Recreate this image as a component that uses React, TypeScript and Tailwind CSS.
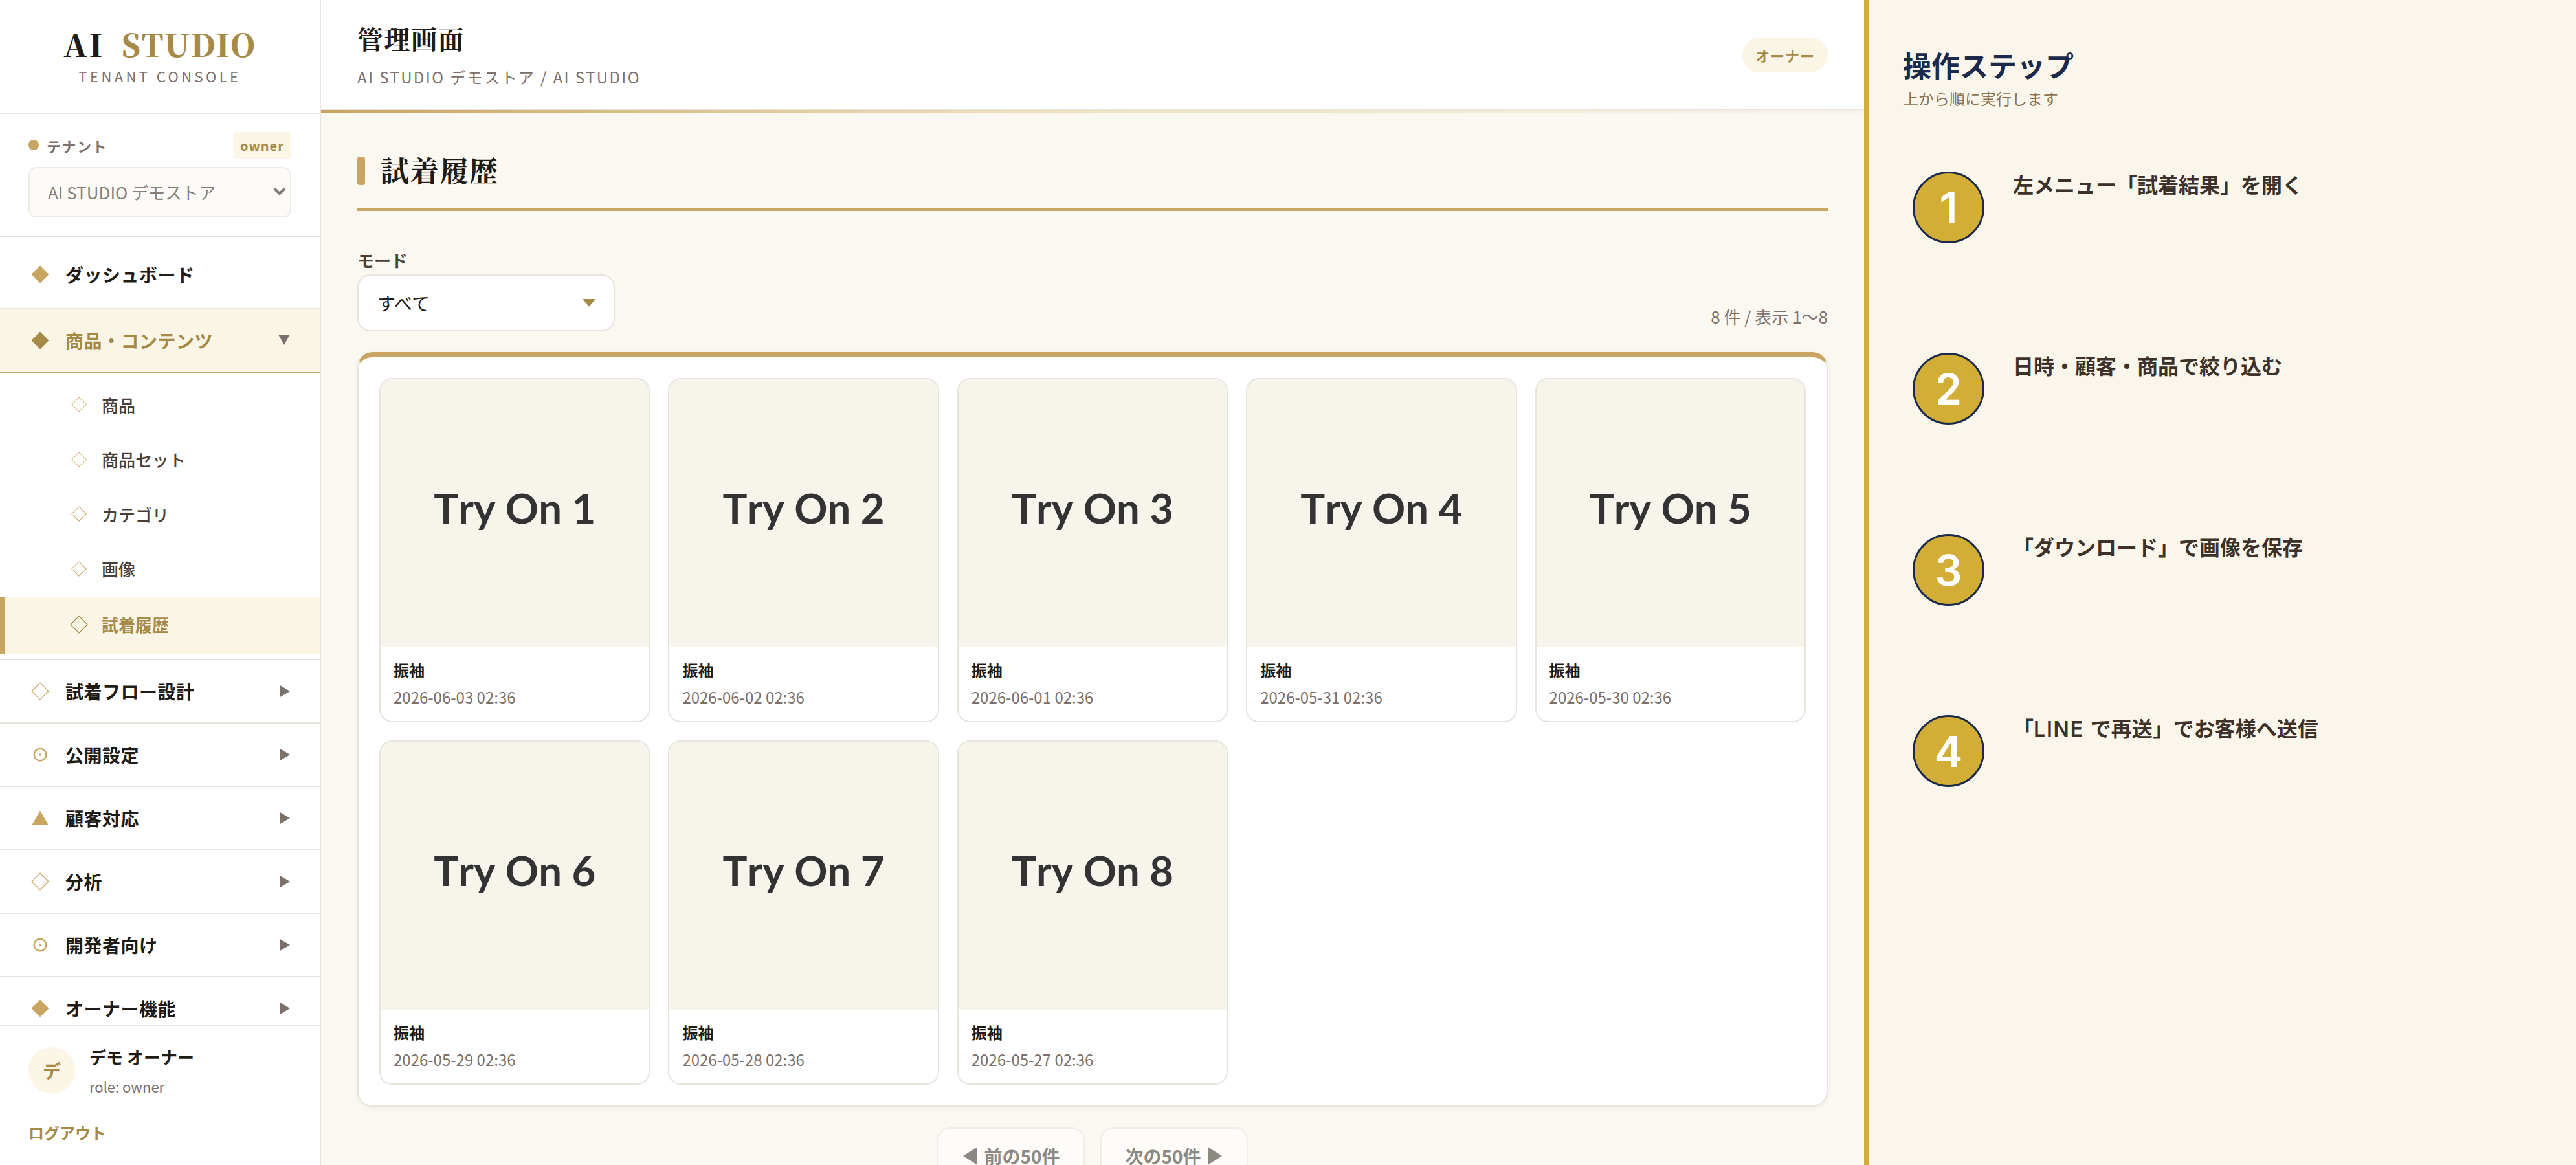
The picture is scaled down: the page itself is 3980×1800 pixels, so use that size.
import React from "react";

const serif = "font-['Noto_Serif_CJK_JP','Noto_Serif_JP','Noto_Serif','Liberation_Serif',serif]";

type IconKind = "solid" | "outline" | "circle" | "triangle";

function Glyph({ kind, size = 28, className = "text-[#c8a560]" }: { kind: IconKind; size?: number; className?: string }) {
  return (
    <svg width={size} height={size} viewBox="0 0 28 28" className={`shrink-0 ${className}`}>
      {kind === "solid" && <path d="M14 0.5L27.5 14L14 27.5L0.5 14Z" fill="currentColor" />}
      {kind === "outline" && <path d="M14 1L27 14L14 27L1 14Z" fill="none" stroke="currentColor" strokeWidth="1.2" />}
      {kind === "circle" && (
        <>
          <circle cx="14" cy="14" r="9.3" fill="none" stroke="currentColor" strokeWidth="2.4" />
          <circle cx="14" cy="14" r="1.8" fill="currentColor" />
        </>
      )}
      {kind === "triangle" && <path d="M14 2.5L27 25H1Z" fill="currentColor" />}
    </svg>
  );
}

const subItems = ["商品", "商品セット", "カテゴリ", "画像"];

const groups: { label: string; icon: IconKind }[] = [
  { label: "試着フロー設計", icon: "outline" },
  { label: "公開設定", icon: "circle" },
  { label: "顧客対応", icon: "triangle" },
  { label: "分析", icon: "outline" },
  { label: "開発者向け", icon: "circle" },
  { label: "オーナー機能", icon: "solid" },
];

const tryOns = [
  "2026-06-03 02:36",
  "2026-06-02 02:36",
  "2026-06-01 02:36",
  "2026-05-31 02:36",
  "2026-05-30 02:36",
  "2026-05-29 02:36",
  "2026-05-28 02:36",
  "2026-05-27 02:36",
];

const steps: React.ReactNode[] = [
  "左メニュー「試着結果」を開く",
  "日時・顧客・商品で絞り込む",
  "「ダウンロード」で画像を保存",
  <>「<span className="tracking-[1.8px]">LINE </span>で再送」でお客様へ送信</>,
];

function Sidebar() {
  return (
    <aside className="flex h-full w-[496px] shrink-0 flex-col border-r-2 border-[#e7e3dd] bg-white">
      <div className="h-[176px] shrink-0 border-b-2 border-[#e7e3dd] pt-[33px] text-center">
        <div className={`${serif} text-[48px] leading-[70px] font-black tracking-[1.9px] text-[#1f1b16] whitespace-pre`}>
          <span className="tracking-[3.2px]">AI </span>
          <span className="ml-[11px] text-[#a68a47]">STUDIO</span>
        </div>
        <div className="text-[22px] leading-[28px] tracking-[4.4px] text-[#7c706a]">TENANT CONSOLE</div>
      </div>
      <div className="h-[190px] shrink-0 border-b-2 border-[#e7e3dd] px-11 pt-7">
        <div className="flex h-[42px] items-center">
          <span className="mt-[-2px] size-4 rounded-full bg-[#c8a560]" />
          <span className="ml-3 text-[22px] font-bold tracking-[1.5px] text-[#7c706a]">テナント</span>
          <span className="ml-auto flex h-[42px] w-[90px] items-center justify-center rounded-lg bg-[#fbf5e6] text-[20px] font-bold tracking-[1px] text-[#a68a47]">owner</span>
        </div>
        <div className="mt-3 flex h-[78px] items-center justify-between rounded-xl border-2 border-[#eeebe7] bg-[#fcfbf7] pr-[6px] pb-0.5 pl-7 text-[26px] text-[#857f78]">
          AI STUDIO デモストア
          <svg width="20" height="14" viewBox="0 0 20 14" fill="none" stroke="#7f7973" strokeWidth="4">
            <path d="M2 2.5L10 10L18 2.5" />
          </svg>
        </div>
      </div>
      <nav className="min-h-0 flex-1 overflow-hidden pt-2 text-[28px] font-bold text-[#1f1b16]">
        <div className="flex h-[104px] items-center gap-[25px] border-b-2 border-[#e7e3dd] pb-0.5 pl-12">
          <Glyph kind="solid" />
          <span className="tracking-[0.5px]">ダッシュボード</span>
        </div>
        <div className="flex h-[98px] items-center gap-[25px] border-b-2 border-[#c8a560] bg-[#fbf5e6] pr-[45px] pl-12 text-[#a68a47]">
          <Glyph kind="solid" className="text-[#a68a47]" />
          <span className="tracking-[0.5px]">商品・コンテンツ</span>
          <svg width="20" height="18" viewBox="0 0 20 18" className="mt-[-2px] ml-auto text-[#7c706a]">
            <path d="M1 1H19L10 17Z" fill="currentColor" />
          </svg>
        </div>
        <div className="border-b-2 border-[#e7e3dd] pt-2 pb-2">
          {subItems.map((label) => (
            <div key={label} className="flex h-[84.5px] items-center gap-[23px] pb-0.5 pl-[110px] text-[26px] font-medium text-[#4a3f38]">
              <Glyph kind="outline" size={24} />
              {label}
            </div>
          ))}
          <div className="flex h-[88px] items-center gap-[21px] border-l-8 border-[#c8a560] bg-[#fbf5e6] pb-[3px] pl-[100px] text-[26px] text-[#a68a47]">
            <Glyph kind="outline" className="text-[#a68a47]" />
            試着履歴
          </div>
        </div>
        {groups.map((g) => (
          <div key={g.label} className="flex h-[98px] items-center gap-[25px] border-b-2 border-[#e7e3dd] pr-[45px] pb-px pl-12">
            <Glyph kind={g.icon} />
            <span className="tracking-[0.5px]">{g.label}</span>
            <svg width="18" height="20" viewBox="0 0 18 20" className="ml-auto text-[#7c706a]">
              <path d="M1 0.5V19.5L17 10Z" fill="currentColor" />
            </svg>
          </div>
        ))}
      </nav>
      <div className="h-[216px] shrink-0 border-t-2 border-[#e7e3dd] px-11 pt-[26px]">
        <div className="flex items-center gap-[22px]">
          <div className="mt-[2px] flex size-[72px] items-center justify-center rounded-full bg-[#fbf5e6] text-[28px] font-bold text-[#a68a47]">デ</div>
          <div>
            <div className="text-[26px] leading-[42px] font-bold text-[#1f1b16]">デモ オーナー</div>
            <div className="mt-2 text-[22px] leading-8 text-[#7c706a]">role: owner</div>
          </div>
        </div>
        <div className="mt-[38px] text-[24px] leading-9 font-bold text-[#a68a47]">ログアウト</div>
      </div>
    </aside>
  );
}

function TryOnCard({ index, date }: { index: number; date: string }) {
  return (
    <div className="h-[532px] overflow-hidden rounded-[20px] border-2 border-[#e7e3dd] bg-white">
      <div className="flex h-[414px] items-center justify-center bg-[#f7f4ec] pb-4 font-['Lato',sans-serif] text-[63.5px] font-bold text-[#333333] [font-kerning:none]">
        Try On {index}
      </div>
      <div className="px-5 pt-[14px]">
        <div className="text-[24px] leading-[42px] font-bold text-[#1f1b16]">振袖</div>
        <div className="text-[24px] leading-[42px] text-[#7c706a]">{date}</div>
      </div>
    </div>
  );
}

function Main() {
  return (
    <main className="flex h-full w-[2384px] shrink-0 flex-col overflow-hidden bg-[#fbf8f1]">
      <header className="relative flex h-[170px] shrink-0 items-center justify-between border-b-2 border-[#e7e3dd] bg-white px-14 shadow-[0_2px_8px_rgba(31,27,22,0.05)]">
        <div>
          <h1 className={`${serif} text-[40px] leading-[56px] font-bold tracking-[1.6px] text-[#1f1b16]`}>管理画面</h1>
          <p className="mt-[14px] text-[24px] leading-9 tracking-[2.4px] text-[#7c706a]">AI STUDIO デモストア / AI STUDIO</p>
        </div>
        <span className="mt-0.5 flex h-[54px] w-[132px] items-center justify-center rounded-full bg-[#fbf5e6] text-[22px] font-bold tracking-[0.9px] text-[#a68a47]">オーナー</span>
        <div className="absolute inset-x-0 -bottom-1.5 h-1 bg-linear-to-r from-[#c8a560] via-[#ece0bc] via-45% to-transparent" />
      </header>
      <div className="px-14 pt-[60px]">
        <div className="flex h-24 items-start gap-6 border-b-4 border-[#c8a560] pt-3">
          <span className="h-11 w-3 rounded bg-[#c8a560]" />
          <h2 className={`${serif} -mt-0.5 text-[44px] leading-[44px] font-bold tracking-[1.76px] text-[#1f1b16]`}>試着履歴</h2>
        </div>
        <div className="mt-14 flex items-end justify-between">
          <div>
            <div className="h-[42px] text-[26px] leading-10 font-bold text-[#4a3f38]">モード</div>
            <div className="flex h-[88px] w-[398px] items-center justify-between rounded-[20px] border-2 border-[#e7e3dd] bg-white pr-7 pl-[29px] text-[28px] text-[#1f1b16]">
              すべて
              <svg width="20" height="12" viewBox="0 0 20 12">
                <path d="M0 0H20L10 12Z" fill="#a68a47" />
              </svg>
            </div>
          </div>
          <div className="h-11 text-[26px] leading-[42px] text-[#7c706a]">8 件 / 表示 1〜8</div>
        </div>
        <section className="mt-8 grid grid-cols-5 gap-7 rounded-[24px] border-2 border-t-8 border-[#e7e3dd] border-t-[#c8a560] bg-white p-8 shadow-[0_2px_8px_rgba(31,27,22,0.05)]">
          {tryOns.map((date, i) => (
            <TryOnCard key={date} index={i + 1} date={date} />
          ))}
        </section>
        <div className="mt-8 flex justify-center gap-6 text-[28px] font-bold text-[#8c8982]">
          <div className="flex h-[88px] w-[228px] items-center justify-center gap-[10px] rounded-[20px] border-2 border-[#f1ede6] bg-[#fdfcf8] pl-0.5">
            <svg width="22" height="28" viewBox="0 0 22 28"><path d="M22 0V28L0 14Z" fill="currentColor" /></svg>
            前の50件
          </div>
          <div className="flex h-[88px] w-[228px] items-center justify-center gap-[10px] rounded-[20px] border-2 border-[#f1ede6] bg-[#fdfcf8] pr-0.5">
            次の50件
            <svg width="22" height="28" viewBox="0 0 22 28"><path d="M0 0V28L22 14Z" fill="currentColor" /></svg>
          </div>
        </div>
      </div>
    </main>
  );
}

function StepsPanel() {
  return (
    <aside className="h-full w-[1100px] shrink-0 border-l-7 border-[#d3ae36] bg-[#faf6eb] pt-[68px] pl-[53px]">
      <h2 className="text-[44px] leading-[64px] font-bold text-[#1b2a4a]">操作ステップ</h2>
      <p className="mt-px text-[24px] leading-[38px] text-[#8a7350]">上から順に実行します</p>
      <ol className="mt-[94px] ml-[15px]">
        {steps.map((text, i) => (
          <li key={i} className="flex h-[280px] items-start gap-[44px]">
            <span className="flex size-[111px] items-center justify-center rounded-full border-[3px] border-[#1b2a4a] bg-[#d3ae36] pt-0.5 font-['Inter',sans-serif] text-[66px] font-semibold text-white">{i + 1}</span>
            <span className="font-['Inter','Noto_Sans_CJK_JP',sans-serif] text-[32px] leading-[44px] font-semibold text-[#3d3129]">{text}</span>
          </li>
        ))}
      </ol>
    </aside>
  );
}

export default function App() {
  return (
    <div lang="ja" className="flex h-[1800px] w-[3980px] overflow-hidden font-['Noto_Sans_CJK_JP','Noto_Sans',sans-serif]">
      <Sidebar />
      <Main />
      <StepsPanel />
    </div>
  );
}
